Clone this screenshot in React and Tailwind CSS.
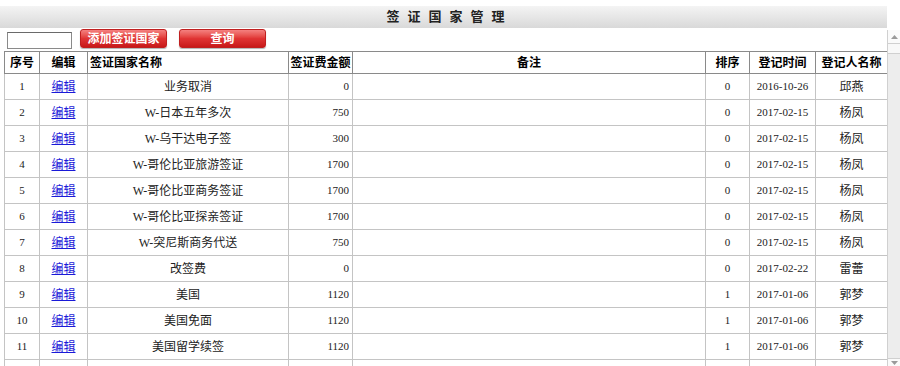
import React from "react";

const rows = [
  ["1", "业务取消", "0", "0", "2016-10-26", "邱燕"],
  ["2", "W-日本五年多次", "750", "0", "2017-02-15", "杨凤"],
  ["3", "W-乌干达电子签", "300", "0", "2017-02-15", "杨凤"],
  ["4", "W-哥伦比亚旅游签证", "1700", "0", "2017-02-15", "杨凤"],
  ["5", "W-哥伦比亚商务签证", "1700", "0", "2017-02-15", "杨凤"],
  ["6", "W-哥伦比亚探亲签证", "1700", "0", "2017-02-15", "杨凤"],
  ["7", "W-突尼斯商务代送", "750", "0", "2017-02-15", "杨凤"],
  ["8", "改签费", "0", "0", "2017-02-22", "雷蕾"],
  ["9", "美国", "1120", "1", "2017-01-06", "郭梦"],
  ["10", "美国免面", "1120", "1", "2017-01-06", "郭梦"],
  ["11", "美国留学续签", "1120", "1", "2017-01-06", "郭梦"],
  ["", "", "", "", "", ""],
];

const font = { fontFamily: '"Liberation Serif", "Noto Sans CJK SC", serif' };

export default function App() {
  const th = "border border-[#8a8a8a] font-bold text-[12px] text-black h-[22px] p-0";
  const td = "border border-[#c4c4c4] text-[11px] text-[#222] h-[26px] p-0";
  return (
    <div className="w-[900px] h-[366px] overflow-hidden bg-white flex flex-col" style={font}>
      <div className="pt-[6px]">
        <div className="w-[887px] h-[22px] bg-gradient-to-b from-[#f4f4f4] to-[#d9d9d9] flex items-center justify-center">
          <span className="text-[13px] font-bold tracking-[8px] text-[#222] pl-[12px]">签证国家管理</span>
        </div>
      </div>
      <div className="flex flex-1 min-h-0">
        <div className="w-[887px] overflow-hidden">
          <div className="flex items-start h-[22px] pt-[1px]">
            <div className="ml-[7px] mt-[3px] w-[65px] h-[17px] border border-[#8a8a8a] border-t-[#6a6a6a] bg-white" />
            <button className="ml-[8px] w-[87px] h-[19px] rounded-[3px] bg-gradient-to-b from-[#f48080] via-[#e03434] to-[#c81818] border border-[#c02020] text-white text-[12px] font-bold leading-none shadow-[0_1px_1px_rgba(0,0,0,0.3)]">
              添加签证国家
            </button>
            <button className="ml-[12px] w-[87px] h-[19px] rounded-[3px] bg-gradient-to-b from-[#f48080] via-[#e03434] to-[#c81818] border border-[#c02020] text-white text-[12px] font-bold leading-none shadow-[0_1px_1px_rgba(0,0,0,0.3)]">
              查询
            </button>
          </div>
          <table className="mt-[1px] ml-[4px] border-collapse table-fixed w-[883px]">
            <colgroup>
              <col className="w-[35px]" />
              <col className="w-[48px]" />
              <col className="w-[201px]" />
              <col className="w-[64px]" />
              <col className="w-[353px]" />
              <col className="w-[44px]" />
              <col className="w-[66px]" />
              <col className="w-[72px]" />
            </colgroup>
            <thead>
              <tr>
                <th className={th}>序号</th>
                <th className={th}>编辑</th>
                <th className={th + " text-left pl-[2px]"}>签证国家名称</th>
                <th className={th}>签证费金额</th>
                <th className={th}>备注</th>
                <th className={th}>排序</th>
                <th className={th}>登记时间</th>
                <th className={th}>登记人名称</th>
              </tr>
            </thead>
            <tbody>
              {rows.map((r, i) => (
                <tr key={i}>
                  <td className={td + " text-center"}>{r[0]}</td>
                  <td className={td + " text-center"}>
                    {r[0] && (
                      <a className="text-[#1a1ad8] underline text-[12px]" href="#">编辑</a>
                    )}
                  </td>
                  <td className={td + " text-center text-[12px]"}>{r[1]}</td>
                  <td className={td + " text-right pr-[3px]"}>{r[2]}</td>
                  <td className={td}></td>
                  <td className={td + " text-center"}>{r[3]}</td>
                  <td className={td + " text-center"}>{r[4]}</td>
                  <td className={td + " text-center text-[12px]"}>{r[5]}</td>
                </tr>
              ))}
            </tbody>
          </table>
        </div>
        <div className="w-[13px] mt-[2px] bg-[#ededed] border-l border-[#d0d0d0] flex flex-col">
          <div className="h-[14px] bg-[#fafafa] border-b border-[#d0d0d0] flex items-center justify-center">
            <svg width="7" height="4" viewBox="0 0 7 4"><path d="M0 4 L3.5 0 L7 4 Z" fill="#9a9a9a" /></svg>
          </div>
          <div className="h-[10px] bg-[#f8f8f8] border-b border-[#d0d0d0]" />
          <div className="flex-1" />
          <div className="h-[8px] bg-[#fafafa] border-t border-[#d0d0d0] flex items-center justify-center">
            <svg width="7" height="4" viewBox="0 0 7 4"><path d="M0 0 L3.5 4 L7 0 Z" fill="#9a9a9a" /></svg>
          </div>
        </div>
      </div>
    </div>
  );
}
